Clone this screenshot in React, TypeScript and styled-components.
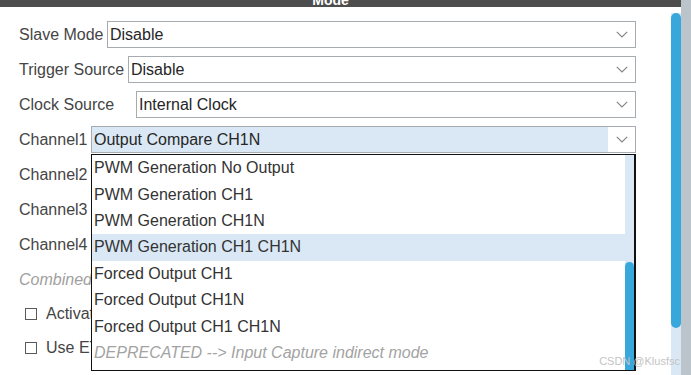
import React from 'react';
import styled, { createGlobalStyle } from 'styled-components';

const GlobalStyle = createGlobalStyle`
  html, body {
    margin: 0;
    padding: 0;
    background: #ffffff;
    overflow: hidden;
  }
  body {
    font-family: "Liberation Sans", Arial, sans-serif;
  }
`;

const Screen = styled.div`
  width: 691px;
  height: 375px;
  display: flex;
  overflow: hidden;
  position: relative;
  background: #ffffff;
`;

const Pane = styled.div`
  width: 681px;
  display: flex;
  flex-direction: column;
`;

const Header = styled.div`
  height: 7px;
  flex: none;
  background: #4d4d4d;
  display: flex;
  align-items: flex-end;
  justify-content: center;
  overflow: hidden;
`;

const HeaderTitle = styled.span`
  color: #ffffff;
  font-size: 14px;
  font-weight: bold;
  line-height: 14px;
  margin-right: 20px;
`;

const Body = styled.div`
  flex: 1;
  display: flex;
  min-height: 0;
`;

const Form = styled.div`
  flex: 1;
  padding: 14px 35px 0 19px;
  display: flex;
  flex-direction: column;
  gap: 8px;
`;

const Row = styled.div`
  height: 27px;
  display: flex;
  align-items: center;
  flex: none;
`;

const Label = styled.div<{ $w: number }>`
  width: ${(p) => p.$w}px;
  flex: none;
  font-size: 16px;
  color: #454545;
  white-space: nowrap;
`;

const SelectWrap = styled.div`
  flex: 1;
  position: relative;
  height: 100%;
`;

const Select = styled.div`
  height: 100%;
  box-sizing: border-box;
  border: 1px solid #a6abb0;
  display: flex;
  align-items: stretch;
  background: #ffffff;
`;

const SelectValue = styled.div<{ $active?: boolean }>`
  flex: 1;
  display: flex;
  align-items: center;
  padding-left: 2px;
  font-size: 16px;
  color: #262626;
  background: ${(p) => (p.$active ? '#dae8f5' : '#ffffff')};
  white-space: nowrap;
`;

const Arrow = styled.div`
  width: 27px;
  display: flex;
  align-items: center;
  justify-content: center;
  flex: none;
`;

const DropList = styled.div`
  position: absolute;
  top: calc(100% + 1px);
  left: 0;
  right: 0;
  height: 217px;
  box-sizing: border-box;
  border: 1px solid #111111;
  border-right-width: 2px;
  background: #ffffff;
  display: flex;
  z-index: 5;
`;

const Options = styled.div`
  flex: 1;
  display: flex;
  flex-direction: column;
`;

const Option = styled.div<{ $hl?: boolean; $muted?: boolean }>`
  height: 26.4px;
  flex: none;
  display: flex;
  align-items: center;
  padding-left: 2px;
  font-size: 16px;
  white-space: nowrap;
  color: ${(p) => (p.$muted ? '#a3a3a3' : '#333333')};
  font-style: ${(p) => (p.$muted ? 'italic' : 'normal')};
  background: ${(p) => (p.$hl ? '#dae8f5' : 'transparent')};
`;

const ListTrack = styled.div`
  width: 9px;
  flex: none;
  background: #dae8f5;
  display: flex;
  flex-direction: column;
  justify-content: flex-end;
`;

const ListThumb = styled.div`
  height: 108px;
  background: #38a8dc;
  border-radius: 5px 5px 0 0;
`;

const SectionTitle = styled.div`
  height: 27px;
  flex: none;
  display: flex;
  align-items: center;
  font-size: 16px;
  font-style: italic;
  color: #a0a0a0;
  white-space: nowrap;
`;

const CheckRow = styled.div<{ $disabled?: boolean }>`
  height: 26px;
  flex: none;
  display: flex;
  align-items: center;
  padding-left: 6px;
  gap: 9px;
  font-size: 16px;
  color: ${(p) => (p.$disabled ? '#a0a0a0' : '#454545')};
  white-space: nowrap;
`;

const Box = styled.span<{ $disabled?: boolean }>`
  width: 12px;
  height: 12px;
  box-sizing: border-box;
  border: 1px solid ${(p) => (p.$disabled ? '#a8a8a8' : '#5a5a5a')};
  background: #ffffff;
  flex: none;
`;

const Track = styled.div`
  width: 10px;
  flex: none;
  display: flex;
  flex-direction: column;
  padding-top: 6px;
  background: #ffffff;
`;

const TrackInner = styled.div`
  flex: 1;
  background: #dae8f5;
  display: flex;
  flex-direction: column;
`;

const Thumb = styled.div`
  height: 315px;
  background: #38a8dc;
  border-radius: 5px;
`;

const Edge = styled.div`
  width: 10px;
  flex: none;
  background: #bac4ca;
`;

const Watermark = styled.div`
  position: absolute;
  right: 11px;
  bottom: 8px;
  font-size: 11px;
  color: #c4c4c4;
  font-family: "Liberation Sans", Arial, sans-serif;
  z-index: 10;
`;

const Chevron = () => (
  <svg width="12" height="7" viewBox="0 0 12 7">
    <path d="M0.8 0.8 L6 6 L11.2 0.8" fill="none" stroke="#858585" strokeWidth="1.2" />
  </svg>
);

const options = [
  'PWM Generation No Output',
  'PWM Generation CH1',
  'PWM Generation CH1N',
  'PWM Generation CH1 CH1N',
  'Forced Output CH1',
  'Forced Output CH1N',
  'Forced Output CH1 CH1N',
];

interface FieldProps {
  label: string;
  width: number;
  value: string;
  open?: boolean;
}

const Field: React.FC<FieldProps> = ({ label, width, value, open }) => (
  <Row>
    <Label $w={width}>{label}</Label>
    <SelectWrap>
      <Select>
        <SelectValue $active={open}>{value}</SelectValue>
        <Arrow>
          <Chevron />
        </Arrow>
      </Select>
      {open && (
        <DropList>
          <Options>
            {options.map((o) => (
              <Option key={o} $hl={o === 'PWM Generation CH1 CH1N'}>
                {o}
              </Option>
            ))}
            <Option $muted>DEPRECATED --&gt; Input Capture indirect mode</Option>
          </Options>
          <ListTrack>
            <ListThumb />
          </ListTrack>
        </DropList>
      )}
    </SelectWrap>
  </Row>
);

export default function App() {
  return (
    <Screen>
      <GlobalStyle />
      <Pane>
        <Header>
          <HeaderTitle>Mode</HeaderTitle>
        </Header>
        <Body>
          <Form>
            <Field label="Slave Mode" width={88} value="Disable" />
            <Field label="Trigger Source" width={109} value="Disable" />
            <Field label="Clock Source" width={117} value="Internal Clock" />
            <Field label="Channel1" width={72} value="Output Compare CH1N" open />
            <Field label="Channel2" width={72} value="Disable" />
            <Field label="Channel3" width={72} value="Disable" />
            <Field label="Channel4" width={72} value="Disable" />
            <SectionTitle>Combined Channels</SectionTitle>
            <CheckRow>
              <Box />
              Activate-Break-Input
            </CheckRow>
            <CheckRow>
              <Box />
              Use ETR as Clearing Source
            </CheckRow>
            <CheckRow $disabled>
              <Box $disabled />
              XOR activation
            </CheckRow>
          </Form>
          <Track>
            <TrackInner>
              <Thumb />
            </TrackInner>
          </Track>
        </Body>
      </Pane>
      <Edge />
      <Watermark>CSDN @Klusfsc</Watermark>
    </Screen>
  );
}
